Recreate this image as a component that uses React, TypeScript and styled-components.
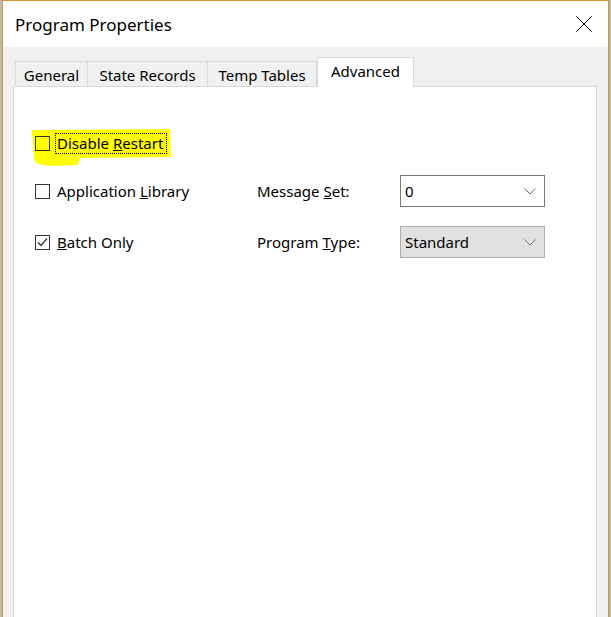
import React from "react";
import styled, { createGlobalStyle } from "styled-components";

const Global = createGlobalStyle`
  html, body { margin: 0; padding: 0; height: 100%; overflow: hidden; }
  body { background: #9a9a9a; font-family: "Noto Sans", "Open Sans", sans-serif; }
  #root { height: 100%; }
`;

const Desktop = styled.div`
  height: 617px;
  padding: 0 2px;
  background: #b9b9b9;
  box-sizing: border-box;
`;

const Window = styled.div`
  height: 100%;
  box-sizing: border-box;
  border: 1px solid #e0902a;
  border-bottom: none;
  background: #f0f0f0;
  display: flex;
  flex-direction: column;
`;

const TitleBar = styled.div`
  height: 46px;
  background: #ffffff;
  display: flex;
  align-items: center;
  justify-content: space-between;
  padding: 0 16px 0 12px;
  flex-shrink: 0;
`;

const Title = styled.div`
  font-size: 17px;
  color: #000;
  padding-top: 1px;
`;

const CloseButton = styled.div`
  width: 16px;
  height: 16px;
  display: flex;
  align-items: center;
  justify-content: center;
`;

const Body = styled.div`
  flex: 1;
  display: flex;
  flex-direction: column;
  padding: 11px 11px 0 10px;
  min-height: 0;
`;

const TabStrip = styled.div`
  display: flex;
  align-items: flex-end;
  height: 29px;
  padding-left: 2px;
  position: relative;
  z-index: 1;
  margin-bottom: -1px;
`;

const Tab = styled.div<{ $w: number; $active?: boolean }>`
  width: ${(p) => p.$w}px;
  box-sizing: border-box;
  height: ${(p) => (p.$active ? 30 : 26)}px;
  border: 1px solid #d9d9d9;
  border-bottom: ${(p) => (p.$active ? "none" : "1px solid #d9d9d9")};
  border-left: ${(p) => (p.$active ? "1px solid #d9d9d9" : "none")};
  background: ${(p) => (p.$active ? "#ffffff" : "#f0f0f0")};
  font-size: 15px;
  color: #000;
  display: flex;
  justify-content: center;
  align-items: ${(p) => (p.$active ? "flex-start" : "center")};
  padding-top: ${(p) => (p.$active ? "3px" : "1px")};
  white-space: nowrap;
  &:first-child { border-left: 1px solid #d9d9d9; }
`;

const Panel = styled.div`
  flex: 1;
  background: #ffffff;
  border: 1px solid #d9d9d9;
  border-bottom: none;
  padding: 40px 0 0 21px;
  display: flex;
  flex-direction: column;
`;

const HighlightRow = styled.div`
  position: relative;
  height: 32px;
  display: flex;
  align-items: center;
  margin-bottom: 16px;
  width: 150px;
`;

const Highlighter = styled.svg`
  position: absolute;
  left: -5px;
  top: 2px;
  width: 145px;
  height: 38px;
  z-index: 0;
`;

const Grid = styled.div`
  display: grid;
  grid-template-columns: 222px 143px 145px;
  grid-auto-rows: 32px;
  row-gap: 19px;
  align-items: center;
`;

const CheckWrap = styled.label`
  display: flex;
  align-items: center;
  gap: 7px;
  font-size: 15px;
  color: #000;
  position: relative;
  z-index: 1;
`;

const Box = styled.span`
  width: 15px;
  height: 15px;
  box-sizing: border-box;
  border: 1px solid #333333;
  background: transparent;
  display: flex;
  align-items: center;
  justify-content: center;
  flex-shrink: 0;
`;

const CheckText = styled.span<{ $focus?: boolean }>`
  padding: 1px 3px 2px 1px;
  margin-left: -2px;
  border: 1px dotted ${(p) => (p.$focus ? "#000" : "transparent")};
  line-height: 16px;
`;

const Label = styled.div`
  font-size: 15px;
  color: #000;
`;

const Combo = styled.div<{ $disabled?: boolean }>`
  height: 32px;
  box-sizing: border-box;
  border: 1px solid ${(p) => (p.$disabled ? "#adadad" : "#7a7a7a")};
  background: ${(p) => (p.$disabled ? "#e1e1e1" : "#ffffff")};
  display: flex;
  align-items: center;
  justify-content: space-between;
  padding: 0 8px 0 4px;
  font-size: 15px;
  color: #000;
`;

const Chevron = () => (
  <svg width="12" height="7" viewBox="0 0 12 7">
    <path d="M0.5 0.5 L6 6 L11.5 0.5" fill="none" stroke="#707070" strokeWidth="1" />
  </svg>
);

const Check = () => (
  <svg width="13" height="13" viewBox="0 0 13 13">
    <path d="M2 6.5 L5 9.5 L11 2.5" fill="none" stroke="#333" strokeWidth="1.3" />
  </svg>
);

const CheckBox = ({ checked, children, focus }: { checked?: boolean; children: React.ReactNode; focus?: boolean }) => (
  <CheckWrap>
    <Box>{checked && <Check />}</Box>
    <CheckText $focus={focus}>{children}</CheckText>
  </CheckWrap>
);

export default function App() {
  return (
    <>
      <Global />
      <Desktop>
        <Window>
          <TitleBar>
            <Title>Program Properties</Title>
            <CloseButton>
              <svg width="16" height="16" viewBox="0 0 16 16">
                <path d="M0.5 0.5 L15.5 15.5 M15.5 0.5 L0.5 15.5" stroke="#000" strokeWidth="1" />
              </svg>
            </CloseButton>
          </TitleBar>
          <Body>
            <TabStrip>
              <Tab $w={73}>General</Tab>
              <Tab $w={120}>State Records</Tab>
              <Tab $w={109}>Temp Tables</Tab>
              <Tab $w={97} $active>Advanced</Tab>
            </TabStrip>
            <Panel>
              <HighlightRow>
                <Highlighter viewBox="0 0 145 38">
                  <path
                    d="M2 1 L140 0 L141 28 L50 29 L48 36 L20 37 L8 35 L4 31 Z"
                    fill="#ffff00"
                  />
                </Highlighter>
                <CheckBox focus>
                  Disable <u>R</u>estart
                </CheckBox>
              </HighlightRow>
              <Grid>
                <CheckBox>
                  Application <u>L</u>ibrary
                </CheckBox>
                <Label>
                  Message <u>S</u>et:
                </Label>
                <Combo>
                  <span>0</span>
                  <Chevron />
                </Combo>
                <CheckBox checked>
                  <u>B</u>atch Only
                </CheckBox>
                <Label>
                  Program <u>T</u>ype:
                </Label>
                <Combo $disabled>
                  <span>Standard</span>
                  <Chevron />
                </Combo>
              </Grid>
            </Panel>
          </Body>
        </Window>
      </Desktop>
    </>
  );
}
